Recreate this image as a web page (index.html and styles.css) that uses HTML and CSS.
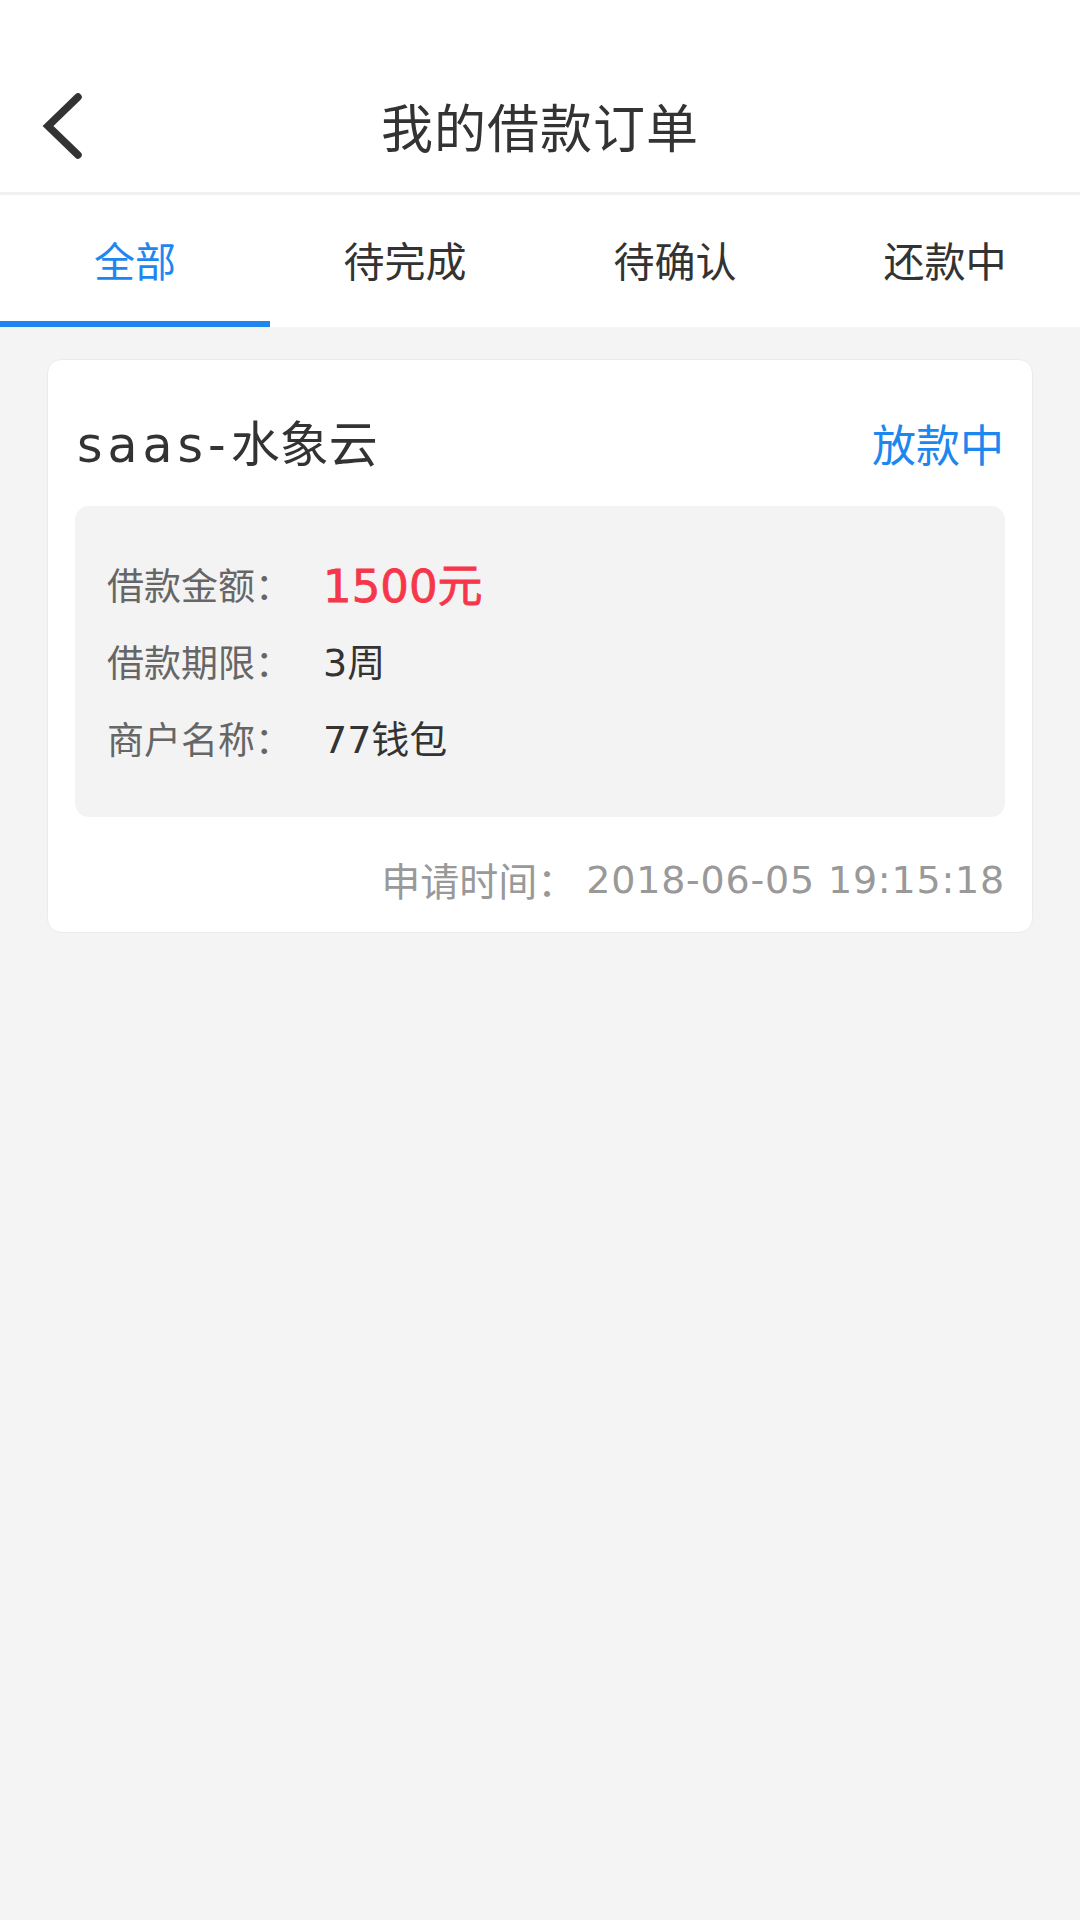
FILE: index.html
```html
<!DOCTYPE html>
<html lang="zh-CN">
<head>
<meta charset="utf-8">
<title>我的借款订单</title>
<link rel="stylesheet" href="styles.css">
</head>
<body>
<div class="page">
  <header class="topbar">
    <div class="nav">
      <div class="nav-left">
        <svg class="back" width="44" height="68" viewBox="0 0 44 68" aria-hidden="true">
          <polyline points="37,5 7,34 37,63" fill="none" stroke="#333333" stroke-width="7.5" stroke-linecap="round" stroke-linejoin="miter"/>
        </svg>
      </div>
      <h1 class="title">我的借款订单</h1>
      <div class="nav-right"></div>
    </div>
  </header>
  <div class="divider"></div>
  <nav class="tabs">
    <div class="tab active"><span>全部</span></div>
    <div class="tab"><span>待完成</span></div>
    <div class="tab"><span>待确认</span></div>
    <div class="tab"><span>还款中</span></div>
  </nav>
  <main class="content">
    <section class="card">
      <div class="card-head">
        <span class="card-name"><span class="latin name-latin">saas-</span>水象云</span>
        <span class="card-status">放款中</span>
      </div>
      <div class="card-body">
        <div class="row row-amount">
          <span class="label">借款金额：</span>
          <span class="value amount"><span class="latin">1500</span>元</span>
        </div>
        <div class="row">
          <span class="label">借款期限：</span>
          <span class="value"><span class="latin">3</span>周</span>
        </div>
        <div class="row">
          <span class="label">商户名称：</span>
          <span class="value"><span class="latin">77</span>钱包</span>
        </div>
      </div>
      <div class="card-foot">
        <span class="time-label">申请时间：</span><span class="time latin">2018-06-05 19:15:18</span>
      </div>
    </section>
  </main>
</div>
</body>
</html>
```

FILE: styles.css
```css
* {
  box-sizing: border-box;
}

html, body {
  margin: 0;
  padding: 0;
}

body {
  width: 1080px;
  min-height: 1920px;
  background: #f4f4f4;
  font-family: "Noto Sans CJK SC", "Noto Sans", "Liberation Sans", sans-serif;
  color: #333333;
}

.page {
  width: 1080px;
  min-height: 1920px;
  background: #f4f4f4;
}

.latin {
  font-family: "DejaVu Sans", "Noto Sans CJK SC", sans-serif;
}

.topbar {
  background: #ffffff;
  height: 192px;
  padding-top: 60px;
}

.nav {
  height: 132px;
  display: grid;
  grid-template-columns: 1fr auto 1fr;
  align-items: center;
}

.nav-left {
  display: flex;
  align-items: center;
  padding-left: 41px;
}

.back {
  display: block;
}

.title {
  margin: 0;
  font-size: 52px;
  font-weight: 400;
  line-height: 1;
  color: #333333;
  letter-spacing: 1px;
}

.divider {
  height: 3px;
  background: #f0f0f0;
}

.tabs {
  display: grid;
  grid-template-columns: repeat(4, 1fr);
  background: #ffffff;
  height: 132px;
}

.tab {
  display: flex;
  align-items: center;
  justify-content: center;
  border-bottom: 6px solid transparent;
  padding-top: 2px;
  font-size: 41px;
  line-height: 1;
  color: #333333;
}

.tab.active {
  color: #1e87ef;
  border-bottom-color: #1e87ef;
}

.content {
  padding: 32px 47px;
}

.card {
  background: #ffffff;
  border: 1px solid #ebebeb;
  border-radius: 14px;
  padding: 0 27px;
}

.card-head {
  display: flex;
  justify-content: space-between;
  align-items: center;
  height: 146px;
  padding-top: 20px;
}

.card-name {
  font-size: 49px;
  line-height: 1;
  color: #333333;
  padding-left: 2px;
}

.name-latin {
  letter-spacing: 5px;
}

.card-status {
  font-size: 44px;
  line-height: 1;
  color: #1e87ef;
  padding-right: 1px;
}

.card-body {
  background: #f3f3f3;
  border-radius: 14px;
  padding: 40px 32px 40px;
}

.row {
  height: 77px;
  display: flex;
  align-items: center;
}

.label {
  width: 216px;
  flex: none;
  font-size: 37px;
  line-height: 1;
  color: #666666;
}

.value {
  font-size: 38px;
  line-height: 1;
  color: #333333;
}

.amount {
  font-size: 45px;
  color: #f5364b;
  -webkit-text-stroke: 0.8px #f5364b;
}

.card-foot {
  height: 115px;
  padding-top: 10px;
  display: flex;
  align-items: center;
  justify-content: flex-end;
  font-size: 38px;
  line-height: 1;
  color: #999999;
}

.time-label {
  font-size: 39px;
  margin-right: 10px;
}

.time {
  letter-spacing: 0.8px;
}
```
